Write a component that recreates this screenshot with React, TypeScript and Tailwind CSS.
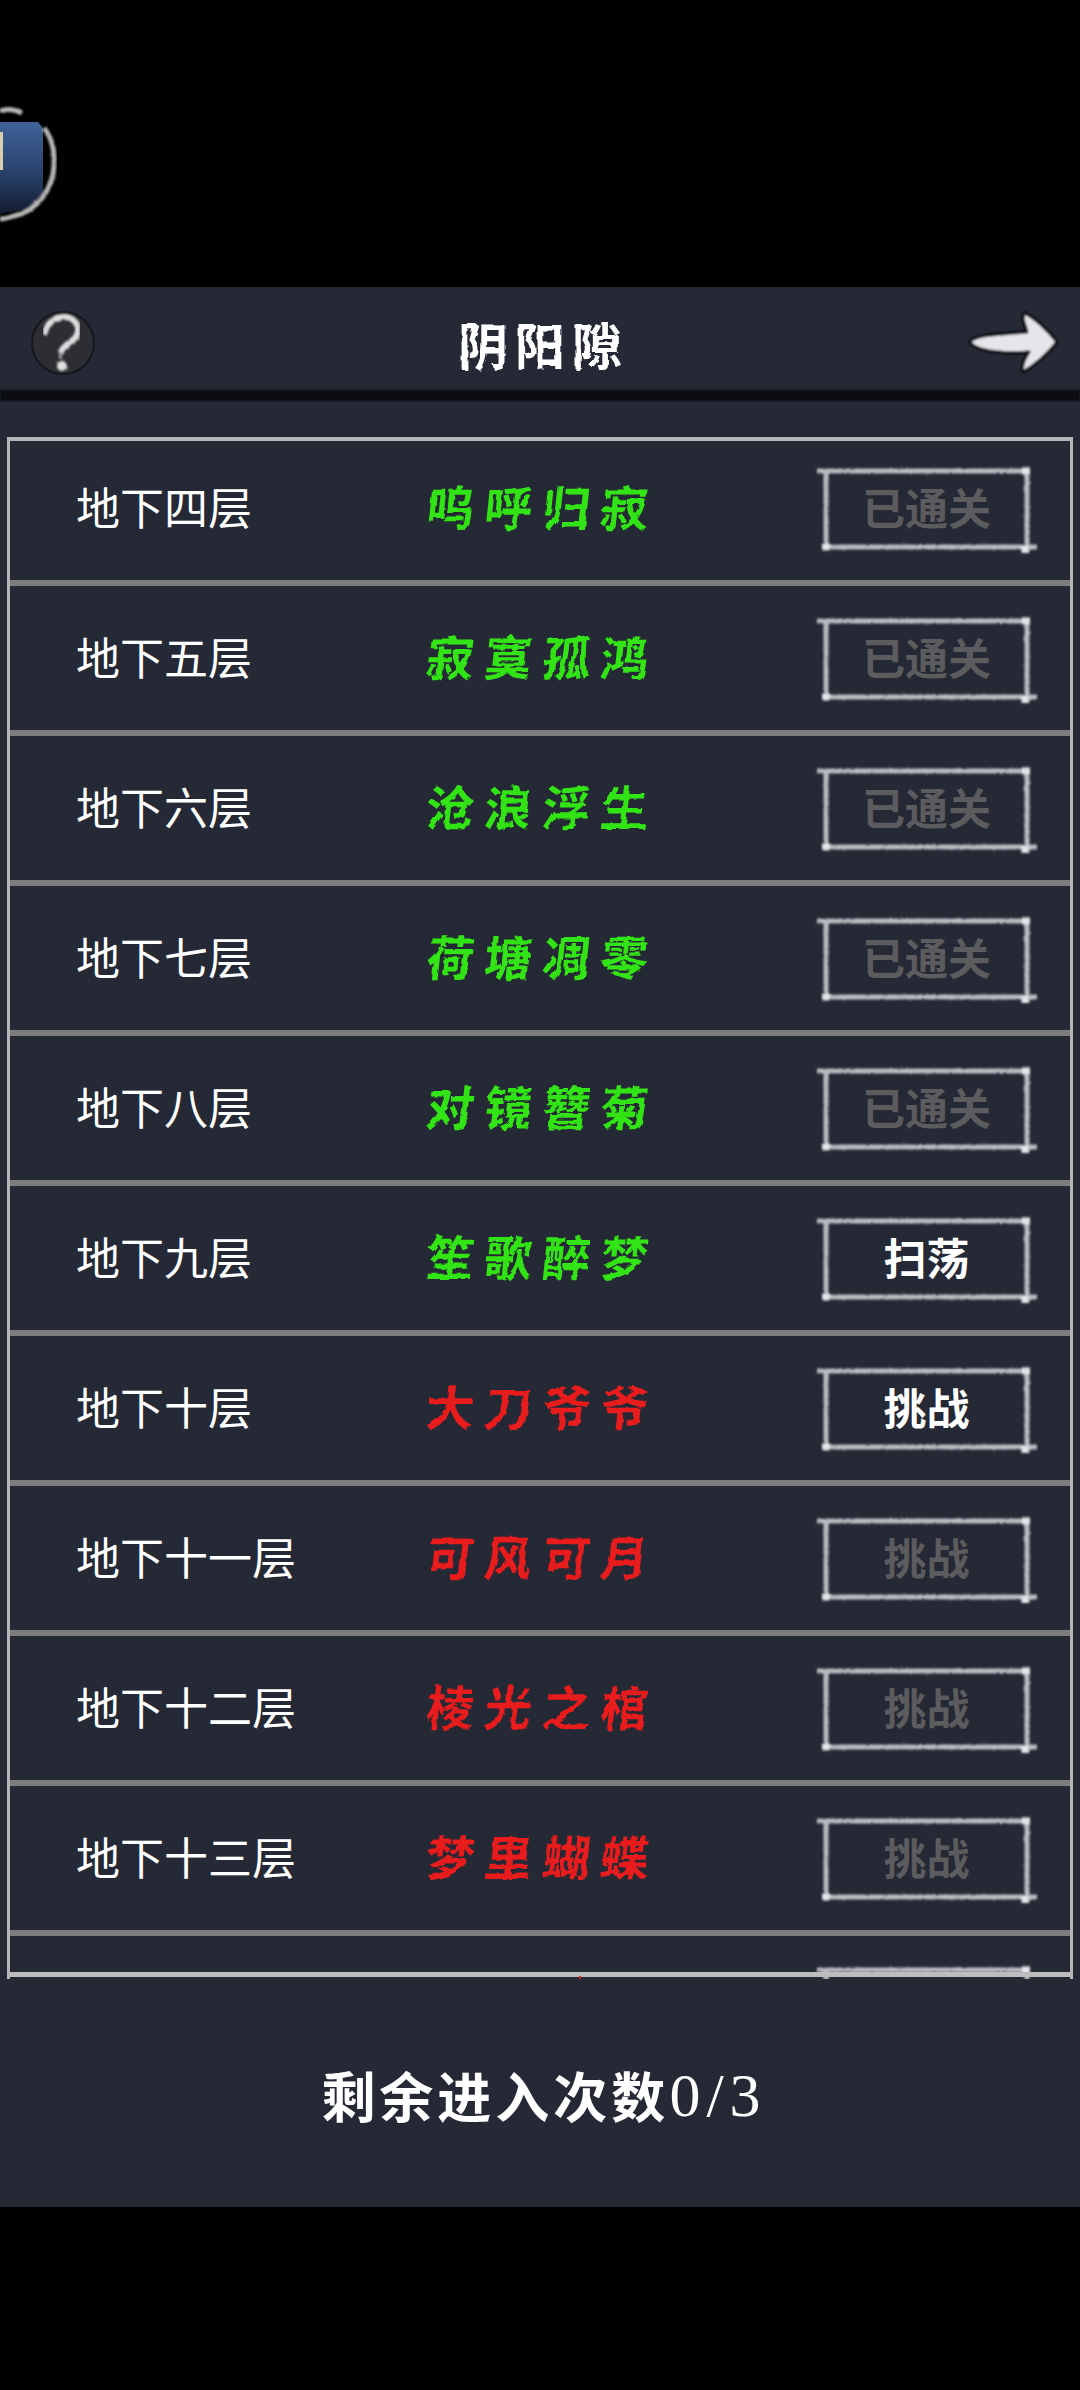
const rows = [
  { name: "地下四层", title: "呜呼归寂", color: "text-[#33e414]", label: "已通关", active: false },
  { name: "地下五层", title: "寂寞孤鸿", color: "text-[#33e414]", label: "已通关", active: false },
  { name: "地下六层", title: "沧浪浮生", color: "text-[#33e414]", label: "已通关", active: false },
  { name: "地下七层", title: "荷塘凋零", color: "text-[#33e414]", label: "已通关", active: false },
  { name: "地下八层", title: "对镜簪菊", color: "text-[#33e414]", label: "已通关", active: false },
  { name: "地下九层", title: "笙歌醉梦", color: "text-[#33e414]", label: "扫荡", active: true },
  { name: "地下十层", title: "大刀爷爷", color: "text-[#e81c1c]", label: "挑战", active: true },
  { name: "地下十一层", title: "可风可月", color: "text-[#e81c1c]", label: "挑战", active: false },
  { name: "地下十二层", title: "棱光之棺", color: "text-[#e81c1c]", label: "挑战", active: false },
  { name: "地下十三层", title: "梦里蝴蝶", color: "text-[#e81c1c]", label: "挑战", active: false },
];

const Filters = () => (
  <svg width="0" height="0" className="absolute">
    <filter id="chalk" x="-5%" y="-10%" width="110%" height="120%">
      <feTurbulence type="fractalNoise" baseFrequency="0.3" numOctaves="2" seed="4" />
      <feDisplacementMap in="SourceGraphic" scale="2.5" />
      <feGaussianBlur stdDeviation="0.8" />
    </filter>
    <filter id="brush" x="-5%" y="-10%" width="110%" height="120%">
      <feTurbulence type="fractalNoise" baseFrequency="0.08" numOctaves="2" seed="7" />
      <feDisplacementMap in="SourceGraphic" scale="4" />
    </filter>
    <filter id="soft" x="-10%" y="-10%" width="120%" height="120%">
      <feGaussianBlur stdDeviation="0.9" />
    </filter>
  </svg>
);

const ChalkBox = () => (
  <svg className="absolute inset-0 overflow-visible" width="207" height="81" fill="none">
    <g filter="url(#chalk)" stroke="#b9bbc0" strokeWidth="5">
      <path d="M-6 3H206" />
      <path d="M0 79H214" />
      <path d="M3 2V82" />
      <path d="M204 1V85" />
      <path d="M199 3H207M-1 79H7M202 78V85" stroke="#e4e5e8" strokeWidth="7" />
    </g>
  </svg>
);

const Row = ({ name, title, color, label, active }: (typeof rows)[number]) => (
  <div className="flex h-[150px] items-center border-b-[6px] border-[#7d7d7d]">
    <span className="w-[417px] pb-[5px] pl-[66px] text-[44px] leading-none text-white">{name}</span>
    <span
      className={`flex-1 pb-[6px] text-[48px] leading-none font-bold tracking-[10px] whitespace-nowrap [filter:url(#brush)] ${color}`}
    >
      <span className="inline-block -skew-x-6">{title}</span>
    </span>
    <div className="relative mr-[40px] flex h-[81px] w-[207px] items-center justify-center">
      <ChalkBox />
      <span
        className={`pb-[4px] text-[43px] leading-none font-bold ${active ? "text-white" : "text-[#5c5c5e]"}`}
      >
        {label}
      </span>
    </div>
  </div>
);

const Badge = () => (
  <svg className="absolute top-[104px] left-0" width="60" height="124" viewBox="0 0 60 124">
    <defs>
      <linearGradient id="blue" x1="0" y1="0" x2="0" y2="1">
        <stop offset="0" stopColor="#3f6299" />
        <stop offset="0.55" stopColor="#2a426c" />
        <stop offset="1" stopColor="#121a2e" />
      </linearGradient>
    </defs>
    <path d="M0 18H38L43 24V90L30 104L0 110Z" fill="url(#blue)" />
    <rect x="0" y="28" width="3" height="38" fill="#d8cfae" />
    <g filter="url(#chalk)" fill="none" stroke="#b5b5b5" strokeWidth="5">
      <path d="M0 7C8 4 16 6 22 9" />
      <path d="M44 24C52 34 55 46 54 62C53 82 40 106 14 112C8 114 4 115 0 115" />
    </g>
  </svg>
);

const HelpIcon = () => (
  <svg width="64" height="64" viewBox="0 0 64 64">
    <circle cx="32" cy="32" r="31" fill="#2c2e33" stroke="#15171c" strokeWidth="2" />
    <g filter="url(#chalk)">
      <path
        d="M14 21C17 10 26 6 33 6C42 6 48 13 47 21C46 30 33 32 30 41"
        fill="none"
        stroke="#dcdcdc"
        strokeWidth="6"
        strokeLinecap="round"
      />
      <path d="M30 41L29 48" stroke="#9a9a9a" strokeWidth="3" />
      <circle cx="31" cy="55" r="5" fill="#e0e0e0" />
    </g>
  </svg>
);

const ArrowIcon = () => (
  <svg width="96" height="66" viewBox="0 0 96 66" filter="url(#soft)">
    <path
      d="M5 32C10 24 35 25 62 22C60 14 56 8 60 3C72 10 84 22 92 32C84 42 72 54 58 62C56 56 60 48 64 42C44 44 12 42 5 32Z"
      fill="#e6e6ea"
      stroke="#0b0d13"
      strokeWidth="3"
      strokeLinejoin="round"
    />
  </svg>
);

const App = () => {
  return (
    <div className="relative flex h-[2390px] flex-col bg-black font-['Noto_Sans_CJK_SC',sans-serif]">
      <Filters />
      <div className="relative h-[287px] shrink-0">
        <Badge />
      </div>

      <div className="flex h-[1920px] shrink-0 flex-col bg-[#252935]">
        <div className="flex h-[103px] shrink-0 items-center justify-between pt-[9px]">
          <div className="w-[130px] pl-[31px]">
            <HelpIcon />
          </div>
          <span className="pl-[7px] text-[50px] leading-none font-bold tracking-[7px] text-white [filter:url(#brush)]">
            阴阳隙
          </span>
          <div className="flex w-[130px] justify-end pr-[19px]">
            <ArrowIcon />
          </div>
        </div>
        <div className="h-[11px] shrink-0 bg-[#0a0c12] blur-[1px]" />

        <div className="relative mx-[7px] mt-[36px] h-[1542px] shrink-0 overflow-hidden border-x-[3px] border-t-[4px] border-[#b5b5b5]">
          <div className="-mt-[5px]">
            {rows.map((row) => (
              <Row key={row.name} {...row} />
            ))}
            {/* next floor is scrolled out, only its button's top edge shows */}
            <div className="flex h-[150px] justify-end pt-[31px]">
              <div className="relative mr-[40px] h-[81px] w-[207px]">
                <ChalkBox />
              </div>
            </div>
          </div>
          <div className="absolute right-0 bottom-[2px] left-0 h-[5px] bg-[#bdbdbd]" />
          <div className="absolute bottom-0 left-[569px] h-[3px] w-[2px] bg-[#e81c1c]" />
        </div>

        <div className="flex flex-1 items-center justify-center pt-[4px] pl-[8px]">
          <span className="flex items-center text-[54px] leading-none font-bold tracking-[4px] text-white">
            剩余进入次数
            <span className="font-['Liberation_Serif',serif] text-[62px] font-normal tracking-[6px]">0/3</span>
          </span>
        </div>
      </div>
    </div>
  );
};

export default App;
